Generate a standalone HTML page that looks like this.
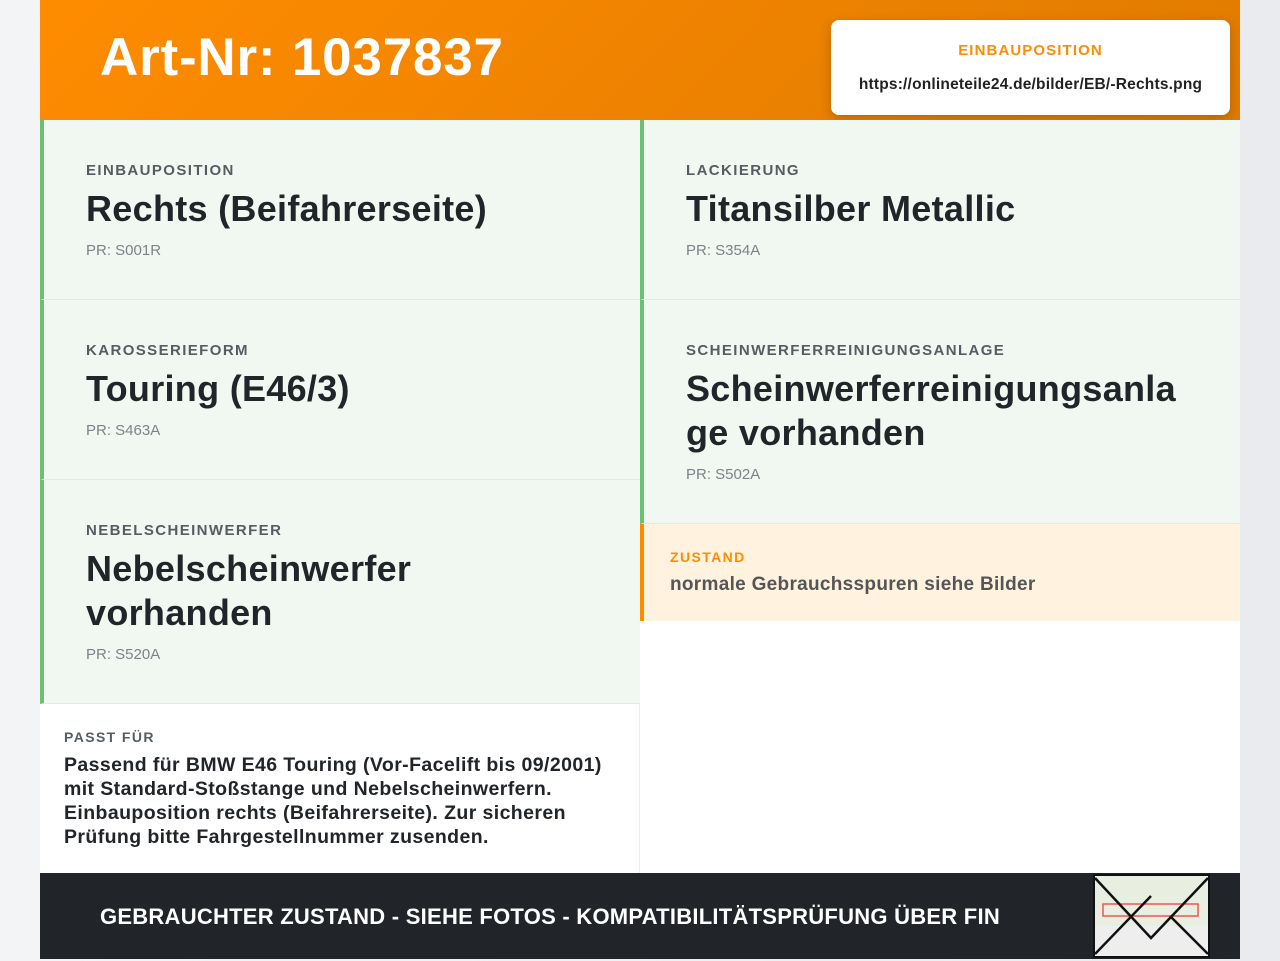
<!DOCTYPE html>
<html><head><meta charset="utf-8"><style>
*{box-sizing:border-box;margin:0;padding:0}
body{width:1280px;height:959px;background:linear-gradient(90deg,#f3f4f6,#e9ebee);font-family:"Liberation Sans",sans-serif;position:relative;overflow:hidden}
.wrap{position:absolute;left:40px;top:0;width:1200px;height:959px;background:#fff}
.hdr{position:absolute;left:0;top:0;width:1200px;height:120px;background:linear-gradient(135deg,#ff8c00,#e07b00)}
.hdr h1{position:absolute;left:60px;top:27px;color:#fff;font-size:53px;font-weight:bold;letter-spacing:0.8px}
.pop{position:absolute;left:791px;top:20px;width:399px;height:95px;background:#fff;border-radius:8px;box-shadow:0 4px 12px rgba(0,0,0,.2);text-align:center}
.pop .l{color:#ff8c00;font-weight:bold;font-size:15px;letter-spacing:1.1px;margin-top:22px}
.pop .u{color:#222;font-weight:bold;font-size:15.5px;margin-top:17px;letter-spacing:0.2px}
.c{position:absolute;background:#f1f8f1;border-left:4px solid #6cc070;border-bottom:1px solid #e3ece3;padding-left:42px}
.lab{font-size:15px;font-weight:bold;color:#555d63;letter-spacing:1.4px;margin-top:42px}
.val{font-size:36px;font-weight:bold;color:#212529;line-height:44px;margin-top:8px;letter-spacing:0.3px}
.pr{font-size:15px;color:#7d8388;margin-top:11px}
.z{position:absolute;left:600px;top:524px;width:600px;height:97px;background:#fff3e0;border-left:4px solid #ff8c00;padding-left:26px}
.z .lab{color:#ff8c00;margin-top:25px;font-size:14px}
.z .t{font-size:19px;font-weight:bold;color:#555;margin-top:9px;letter-spacing:0.3px}
.p{position:absolute;left:0;top:704px;width:600px;height:169px;border-right:1px solid #eee;padding-left:24px}
.p .lab{margin-top:25px;font-size:14px}
.p .t{font-size:19.5px;font-weight:bold;color:#212529;line-height:24px;margin-top:8px;letter-spacing:0.4px}
.f{position:absolute;left:0;top:873px;width:1200px;height:86px;background:#212529}
.f .t{position:absolute;left:60px;top:31px;color:#fff;font-weight:bold;font-size:22px;letter-spacing:0.25px}
.env{position:absolute;left:1053px;top:1px;width:117px;height:84px;background:#e8efe0;border:2px solid #111}
</style></head><body><div class="wrap">
<div class="hdr"><h1>Art-Nr: 1037837</h1>
<div class="pop"><div class="l">EINBAUPOSITION</div><div class="u">https://onlineteile24.de/bilder/EB/-Rechts.png</div></div></div>
<div class="c" style="left:0;top:120px;width:600px;height:180px"><div class="lab">EINBAUPOSITION</div><div class="val">Rechts (Beifahrerseite)</div><div class="pr">PR: S001R</div></div>
<div class="c" style="left:0;top:300px;width:600px;height:180px"><div class="lab">KAROSSERIEFORM</div><div class="val">Touring (E46/3)</div><div class="pr">PR: S463A</div></div>
<div class="c" style="left:0;top:480px;width:600px;height:224px"><div class="lab">NEBELSCHEINWERFER</div><div class="val">Nebelscheinwerfer<br>vorhanden</div><div class="pr">PR: S520A</div></div>
<div class="c" style="left:600px;top:120px;width:600px;height:180px"><div class="lab">LACKIERUNG</div><div class="val">Titansilber Metallic</div><div class="pr">PR: S354A</div></div>
<div class="c" style="left:600px;top:300px;width:600px;height:224px"><div class="lab">SCHEINWERFERREINIGUNGSANLAGE</div><div class="val">Scheinwerferreinigungsanla<br>ge vorhanden</div><div class="pr">PR: S502A</div></div>
<div class="z"><div class="lab">ZUSTAND</div><div class="t">normale Gebrauchsspuren siehe Bilder</div></div>
<div class="p"><div class="lab">PASST FÜR</div><div class="t">Passend für BMW E46 Touring (Vor-Facelift bis 09/2001)<br>mit Standard-Stoßstange und Nebelscheinwerfern.<br>Einbauposition rechts (Beifahrerseite). Zur sicheren<br>Prüfung bitte Fahrgestellnummer zusenden.</div></div>
<div class="f"><div class="t">GEBRAUCHTER ZUSTAND - SIEHE FOTOS - KOMPATIBILITÄTSPRÜFUNG ÜBER FIN</div>
<div class="env"><svg width="113" height="80" viewBox="0 0 113 80"><rect x="0" y="50" width="113" height="30" fill="#eee"/><rect x="8" y="28" width="95" height="12" fill="none" stroke="#e55" stroke-width="1.5"/><path d="M0 2 L56 62 L113 2 M0 78 L56 20 M113 78 L75 40" stroke="#111" stroke-width="2.5" fill="none"/></svg></div></div>
</div></body></html>
